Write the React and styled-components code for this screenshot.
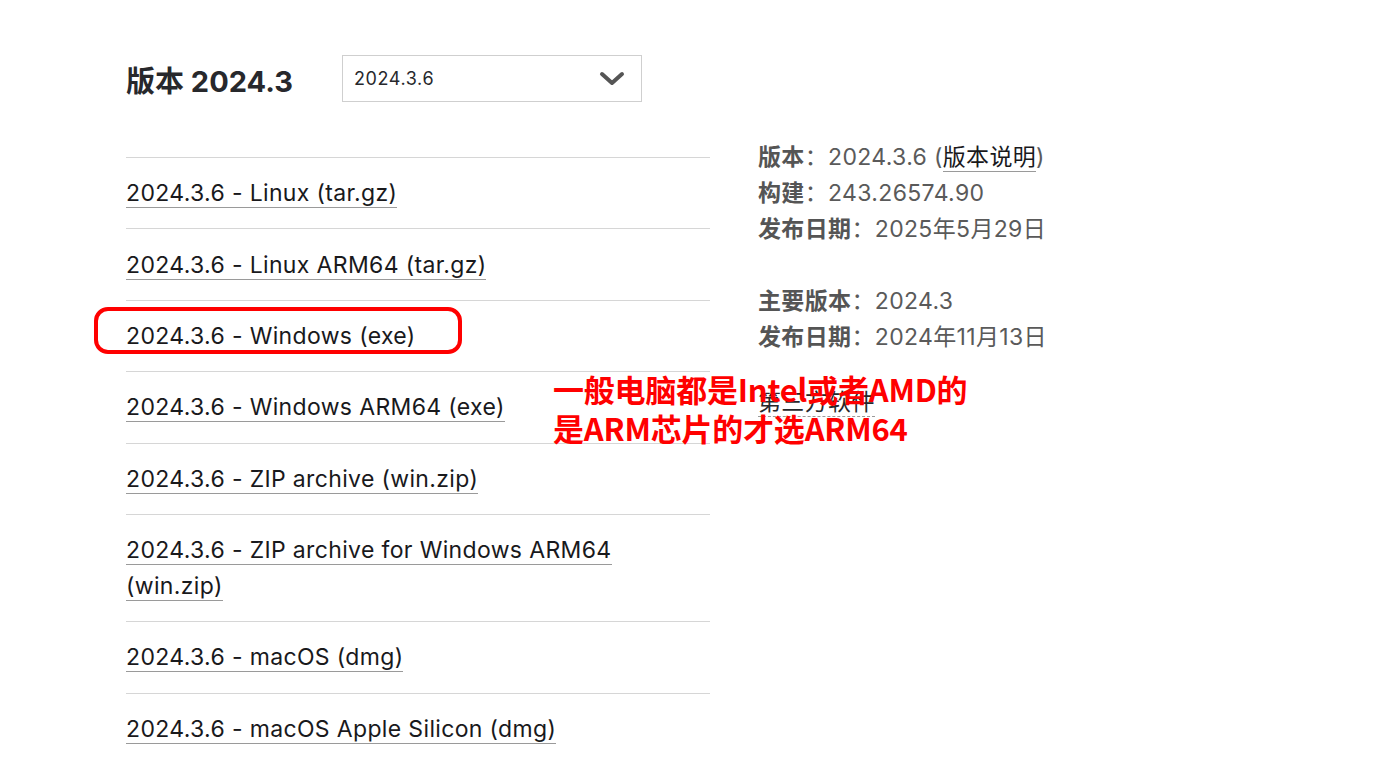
import React from 'react';
import styled, { createGlobalStyle } from 'styled-components';

const GlobalStyle = createGlobalStyle`
  html, body {
    margin: 0;
    padding: 0;
    background: #fff;
  }
  body {
    font-family: Inter, "Noto Sans CJK SC", sans-serif;
    color: #27282c;
  }
`;

const Page = styled.div`
  position: relative;
  width: 1385px;
  height: 781px;
  overflow: hidden;
  padding: 55px 0 0 126px;
  box-sizing: border-box;
`;

const Header = styled.div`
  display: flex;
  align-items: center;
  height: 47px;
`;

const Title = styled.h2`
  margin: 0;
  width: 216px;
  font-size: 29px;
  font-weight: 700;
  color: #27282c;
  white-space: nowrap;
  font-family: Inter, "Noto Sans CJK SC", sans-serif;
`;

const Select = styled.div`
  width: 300px;
  height: 47px;
  box-sizing: border-box;
  border: 1px solid #cfcfcf;
  display: flex;
  align-items: center;
  justify-content: space-between;
  padding: 0 16px 0 11px;
  font-size: 18px;
  letter-spacing: 0.6px;
  color: #27282c;
`;

const Content = styled.div`
  display: grid;
  grid-template-columns: 584px 1fr;
  column-gap: 48px;
  margin-top: 37px;
`;

const List = styled.div`
  padding-top: 18px;
`;

const Row = styled.div`
  position: relative;
  border-top: 1px solid #d6d6d6;
  padding: 17.2px 0;
  font-size: 23px;
  letter-spacing: 0.35px;
  line-height: 36px;
`;

const DownloadLink = styled.span`
  color: #19191c;
  border-bottom: 1px solid #9a9a9a;
`;

const Highlight = styled.div`
  position: absolute;
  left: -32px;
  top: 6px;
  width: 368px;
  height: 47px;
  box-sizing: border-box;
  border: 4px solid #ff0000;
  border-radius: 14px;
`;

const Info = styled.div`
  font-size: 23px;
  letter-spacing: 0.35px;
  line-height: 36px;
  color: #5a5a5a;
`;

const InfoLine = styled.div`
  white-space: nowrap;
  margin-top: ${p => (p.$gap ? '36px' : '0')};
`;

const Label = styled.b`
  font-weight: 700;
  color: #555;
`;

const NoteLink = styled.span`
  color: #19191c;
  border-bottom: 1px solid #9a9a9a;
`;

const ThirdParty = styled.div`
  margin-top: 32px;
  font-size: 23px;
  line-height: 30px;
  color: #27282c;
  span {
    border-bottom: 1px dashed #9a9a9a;
  }
`;

const Annotation = styled.div`
  position: absolute;
  left: 553px;
  top: 369px;
  font-family: "Noto Sans CJK SC", sans-serif;
  font-weight: 700;
  font-size: 31px;
  line-height: 39px;
  color: #ff0000;
  white-space: nowrap;
  letter-spacing: -0.2px;
`;

const Chevron = () => (
  <svg width="26" height="16" viewBox="0 0 26 16">
    <path d="M3 3 L13 12 L23 3" fill="none" stroke="#555" strokeWidth="4" strokeLinecap="round" strokeLinejoin="round" />
  </svg>
);

const downloads = [
  '2024.3.6 - Linux (tar.gz)',
  '2024.3.6 - Linux ARM64 (tar.gz)',
  '2024.3.6 - Windows (exe)',
  '2024.3.6 - Windows ARM64 (exe)',
  '2024.3.6 - ZIP archive (win.zip)',
  '2024.3.6 - ZIP archive for Windows ARM64 (win.zip)',
  '2024.3.6 - macOS (dmg)',
  '2024.3.6 - macOS Apple Silicon (dmg)',
];

export default function App() {
  return (
    <>
      <GlobalStyle />
      <Page>
        <Header>
          <Title>版本 2024.3</Title>
          <Select>
            <span>2024.3.6</span>
            <Chevron />
          </Select>
        </Header>
        <Content>
          <List>
            {downloads.map((d, i) => (
              <Row key={d}>
                <DownloadLink>{d}</DownloadLink>
                {i === 2 && <Highlight />}
              </Row>
            ))}
          </List>
          <Info>
            <InfoLine><Label>版本</Label>：2024.3.6 (<NoteLink>版本说明</NoteLink>)</InfoLine>
            <InfoLine><Label>构建</Label>：243.26574.90</InfoLine>
            <InfoLine><Label>发布日期</Label>：2025年5月29日</InfoLine>
            <InfoLine $gap><Label>主要版本</Label>：2024.3</InfoLine>
            <InfoLine><Label>发布日期</Label>：2024年11月13日</InfoLine>
            <ThirdParty><span>第三方软件</span></ThirdParty>
          </Info>
        </Content>
        <Annotation>
          一般电脑都是Intel或者AMD的
          <br />
          是ARM芯片的才选ARM64
        </Annotation>
      </Page>
    </>
  );
}
